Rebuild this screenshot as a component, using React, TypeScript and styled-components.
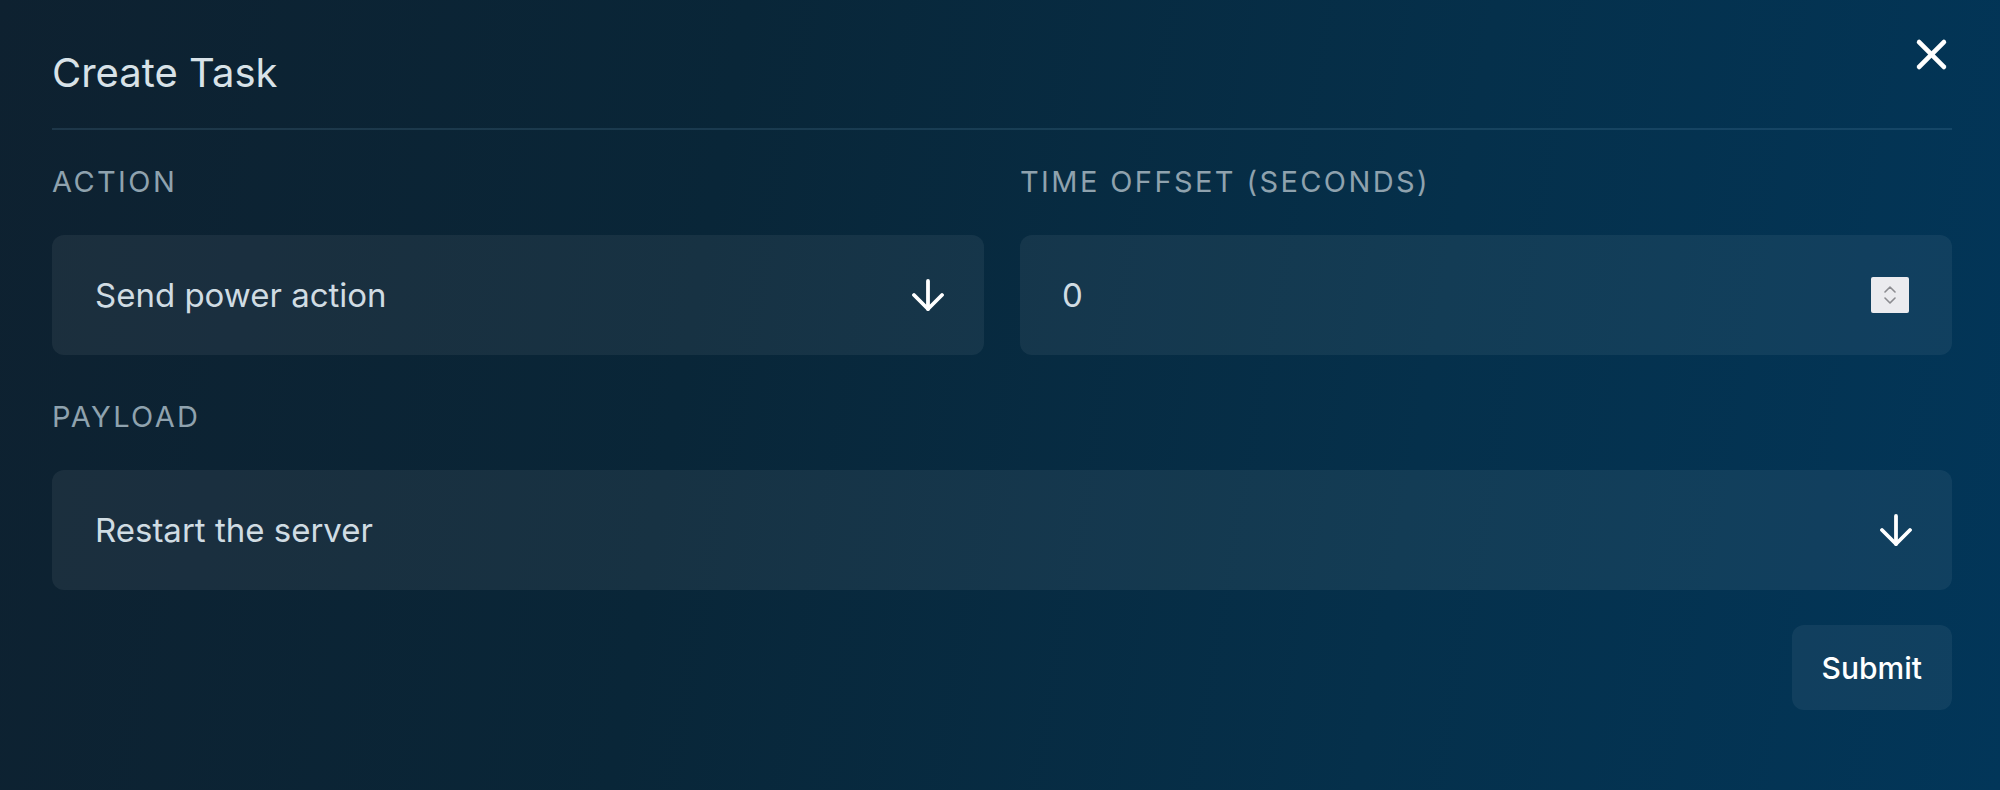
import React, { FC } from 'react'
import styled, { createGlobalStyle } from 'styled-components'

const GlobalStyle = createGlobalStyle`
	html, body {
		margin: 0;
		padding: 0;
		height: 100%;
	}

	body {
		font-family: Inter, 'Noto Sans', 'Liberation Sans', sans-serif;
		background: #0a2233;
	}

	* {
		box-sizing: border-box;
	}
`

const Page = styled.div`
	min-height: 100vh;
	padding: 36px 48px 40px 52px;
	background: linear-gradient(100deg, #0e2130 0%, #092638 35%, #05304b 70%, #023659 100%);
	display: flex;
	flex-direction: column;
`

const Header = styled.header`
	display: flex;
	justify-content: space-between;
	align-items: flex-start;
	padding-bottom: 31px;
	border-bottom: 2px solid rgba(120, 170, 200, 0.16);
`

const Title = styled.h2`
	margin: 13px 0 0 0;
	font-size: 40px;
	line-height: 48px;
	font-weight: 400;
	color: #d8e2e8;
`

const CloseButton = styled.button`
	display: flex;
	padding: 0;
	margin: 2px 4px 0 0;
	border: none;
	background: none;
	color: #ffffff;
	cursor: pointer;
`

const FormGrid = styled.div`
	display: grid;
	grid-template-columns: 1fr 1fr;
	column-gap: 36px;
	margin-top: 32px;
`

const FieldGroup = styled.div<{ $wide?: boolean }>`
	display: flex;
	flex-direction: column;
	grid-column: ${p => (p.$wide ? '1 / -1' : 'auto')};
	margin-top: ${p => (p.$wide ? '42px' : '0')};
`

const Label = styled.label`
	font-size: 29px;
	line-height: 40px;
	letter-spacing: 2.4px;
	text-transform: uppercase;
	color: #8fa2ae;
	margin-bottom: 33px;
`

const Control = styled.div<{ $textInset?: number }>`
	display: flex;
	align-items: center;
	justify-content: space-between;
	height: 120px;
	padding: 0 40px 0 ${p => p.$textInset ?? 43}px;
	border-radius: 12px;
	background: rgba(255, 255, 255, 0.06);
	color: #d0dce3;
	font-size: 33px;
	cursor: pointer;

	svg {
		color: #ffffff;
	}
`

const NumberInput = styled.input`
	flex: 1;
	min-width: 0;
	border: none;
	outline: none;
	background: transparent;
	color: #d0dce3;
	font-family: inherit;
	font-size: 33px;
	padding: 0;
`

const Stepper = styled.span`
	display: flex;
	flex-direction: column;
	align-items: center;
	justify-content: center;
	gap: 4px;
	width: 38px;
	height: 36px;
	margin-right: 3px;
	background: #ebebef;
	border-radius: 2px;

	&& svg {
		color: #8b8b90;
	}
`

const Footer = styled.div`
	display: flex;
	justify-content: flex-end;
	margin-top: 35px;
`

const SubmitButton = styled.button`
	height: 85px;
	padding: 0 30px;
	border: none;
	border-radius: 12px;
	background: rgba(255, 255, 255, 0.06);
	color: #ffffff;
	font-family: inherit;
	font-size: 30px;
	font-weight: 500;
	cursor: pointer;
`

const ArrowDown: FC = () => (
	<svg width='32' height='32' viewBox='4 4 16 16' fill='none' stroke='currentColor' strokeWidth='1.9' strokeLinecap='round' strokeLinejoin='round'>
		<path d='M12 5v14' />
		<path d='m19 12-7 7-7-7' />
	</svg>
)

const CloseIcon: FC = () => (
	<svg width='33' height='33' viewBox='4 4 16 16' fill='none' stroke='currentColor' strokeWidth='2.3' strokeLinecap='round'>
		<path d='M18 6 6 18' />
		<path d='m6 6 12 12' />
	</svg>
)

const Chevron: FC<{ up?: boolean }> = ({ up }) => (
	<svg width='12' height='8' viewBox='0 0 12 8' fill='none' stroke='currentColor' strokeWidth='1.6' strokeLinecap='round' strokeLinejoin='round'>
		<path d={up ? 'M1 7 6 2l5 5' : 'M1 1l5 5 5-5'} />
	</svg>
)

interface SelectProps {
	value: string
}

const SelectField: FC<SelectProps> = ({ value }) => (
	<Control role='combobox'>
		<span>{value}</span>
		<ArrowDown />
	</Control>
)

const App: FC = () => {
	return (
		<>
			<GlobalStyle />
			<Page>
				<Header>
					<Title>Create Task</Title>
					<CloseButton aria-label='Close'>
						<CloseIcon />
					</CloseButton>
				</Header>

				<FormGrid>
					<FieldGroup>
						<Label>Action</Label>
						<SelectField value='Send power action' />
					</FieldGroup>
					<FieldGroup>
						<Label>Time offset (seconds)</Label>
						<Control $textInset={42}>
							<NumberInput type='text' defaultValue='0' />
							<Stepper>
								<Chevron up />
								<Chevron />
							</Stepper>
						</Control>
					</FieldGroup>
					<FieldGroup $wide>
						<Label>Payload</Label>
						<SelectField value='Restart the server' />
					</FieldGroup>
				</FormGrid>

				<Footer>
					<SubmitButton>Submit</SubmitButton>
				</Footer>
			</Page>
		</>
	)
}

export default App
